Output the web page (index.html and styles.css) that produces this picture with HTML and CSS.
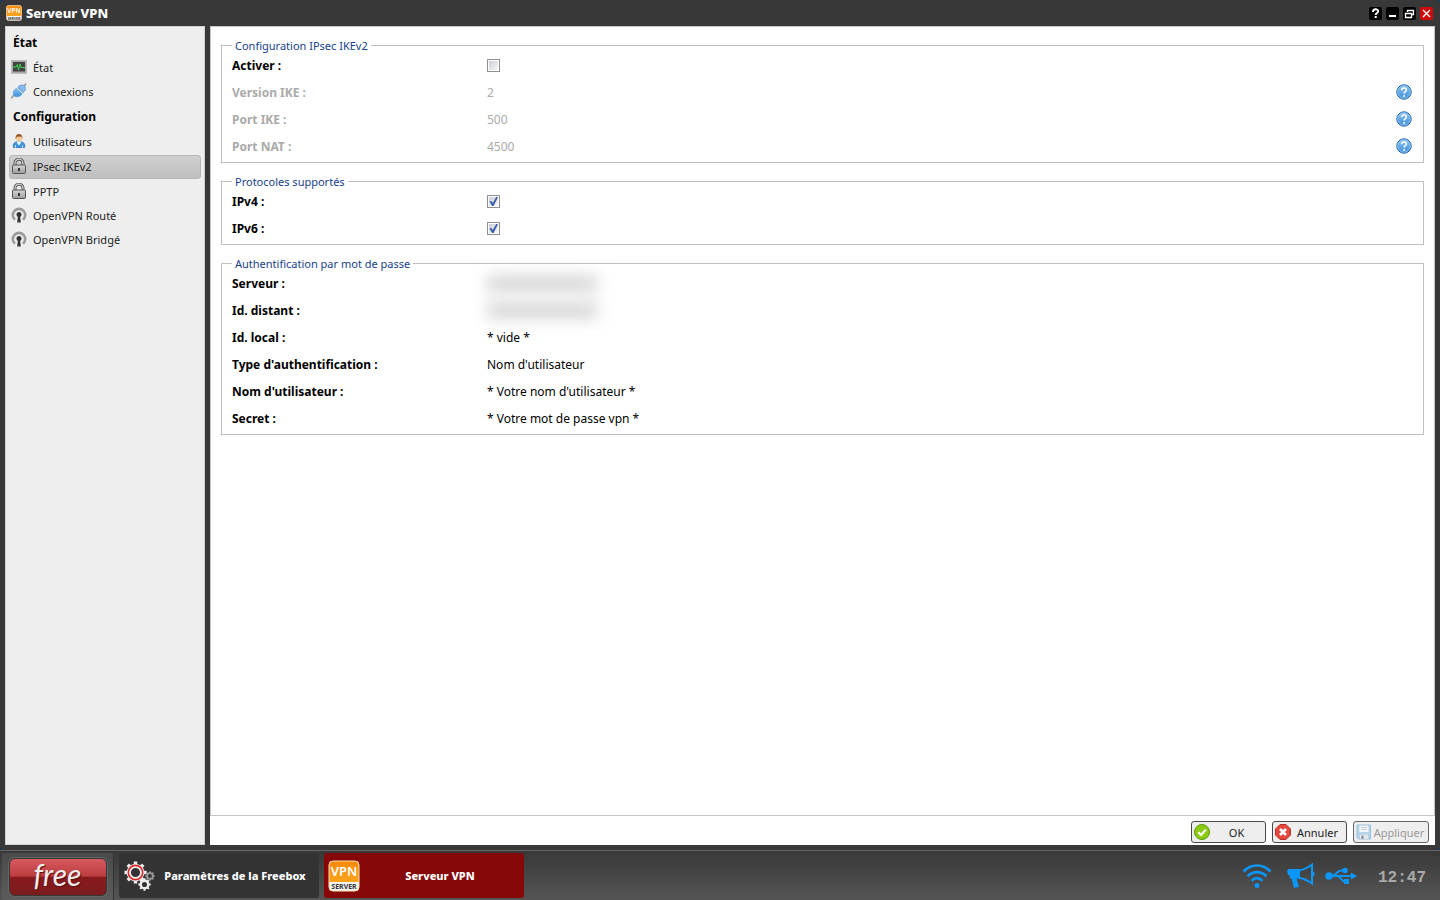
FILE: index.html
```html
<!DOCTYPE html>
<html lang="fr">
<head>
<meta charset="utf-8">
<title>Serveur VPN</title>
<link rel="stylesheet" href="styles.css">
</head>
<body>
<svg class="defs" aria-hidden="true">
  <defs>
    <linearGradient id="orange" x1="0" y1="0" x2="0" y2="1"><stop offset="0" stop-color="#f58a0a"/><stop offset="1" stop-color="#fda31a"/></linearGradient>
    <linearGradient id="steel" x1="0" y1="0" x2="0" y2="1"><stop offset="0" stop-color="#d8d8d8"/><stop offset="1" stop-color="#9a9a9a"/></linearGradient>
    <linearGradient id="sky" x1="0" y1="0" x2="0" y2="1"><stop offset="0" stop-color="#8ec2ee"/><stop offset="1" stop-color="#3c8fdc"/></linearGradient>
    <linearGradient id="silver" x1="0" y1="0" x2="0" y2="1"><stop offset="0" stop-color="#ffffff"/><stop offset="1" stop-color="#b8b8b8"/></linearGradient>
    <symbol id="vpn" viewBox="0 0 32 32">
      <rect x="1" y="1" width="30" height="30" rx="4" fill="#f3f3f3"/>
      <path d="M1 22V5a4 4 0 0 1 4-4h22a4 4 0 0 1 4 4v17z" fill="url(#orange)"/>
      <rect x="1" y="1" width="30" height="30" rx="4" fill="none" stroke="#fde3b4" stroke-width="1"/>
      <text x="16" y="16" text-anchor="middle" class="vpn-top">VPN</text>
      <text x="16" y="29" text-anchor="middle" class="vpn-bottom">SERVER</text>
    </symbol>
    <symbol id="lock" viewBox="0 0 16 16">
      <path d="M4 8V5.200a4 4 0 0 1 8 0V8" fill="none" stroke="#555" stroke-width="3"/>
      <path d="M4 8V5.200a4 4 0 0 1 8 0V8" fill="none" stroke="#d5d5d5" stroke-width="1.200"/>
      <rect x="1.500" y="7" width="13" height="8.500" rx="1" fill="url(#steel)" stroke="#555"/>
      <path d="M7 10h2v3H7z" fill="#333"/>
    </symbol>
    <symbol id="openvpn" viewBox="0 0 16 16">
      <path d="M4 12.800A6.200 6.200 0 1 1 12 12.800" fill="none" stroke="#9c9c9c" stroke-width="2.600"/>
      <circle cx="8" cy="7.500" r="2.500" fill="#333"/>
      <path d="M7 8h2l.8 7.500H6.200z" fill="#333"/>
    </symbol>
    <symbol id="help" viewBox="0 0 16 16">
      <circle cx="8" cy="8" r="7.200" fill="url(#sky)" stroke="#1c62b0"/>
      <circle cx="8" cy="8" r="6.200" fill="none" stroke="#a5cff4" stroke-width=".7"/>
      <path d="M5.600 6.200c0-3 4.800-3 4.800-.2 0 1.600-2.300 1.700-2.300 3.600" fill="none" stroke="#fff" stroke-width="1.500"/>
      <circle cx="8.100" cy="12" r="1" fill="#fff"/>
    </symbol>
    <symbol id="gear" viewBox="0 0 24 24">
      <circle cx="12" cy="12" r="7" fill="none" stroke="currentColor" stroke-width="4.500"/>
      <path d="M12 .5v5M12 18.500v5M.5 12h5M18.500 12h5M3.900 3.900l3.500 3.500M16.600 16.600l3.500 3.500M3.900 20.100l3.500-3.500M16.600 7.400l3.500-3.500" stroke="currentColor" stroke-width="3.600"/>
    </symbol>
  </defs>
</svg>
<div class="desktop">
  <section class="window">
    <header class="titlebar">
      <svg class="icon16"><use href="#vpn"/></svg>
      <h1>Serveur VPN</h1>
      <div class="tools">
        <button class="tool" aria-label="Aide"><svg viewBox="0 0 13 13"><path d="M4 5c0-3.600 5.200-3.400 5.200-.7C9.200 6 6.700 6 6.700 8" fill="none" stroke="#fff" stroke-width="1.900"/><path d="M5.700 9h2v2h-2z" fill="#fff"/></svg></button>
        <button class="tool" aria-label="Réduire"><svg viewBox="0 0 13 13"><path d="M3 8h7v2H3z" fill="#fff"/></svg></button>
        <button class="tool" aria-label="Restaurer"><svg viewBox="0 0 13 13"><path d="M4.500 5V3.500h6v4H9M2.500 6.500h6v4h-6z" fill="none" stroke="#fff" stroke-width="1.300"/></svg></button>
        <button class="tool close" aria-label="Fermer"><svg viewBox="0 0 13 13"><path d="M3 3l7 7M10 3l-7 7" stroke="#fff" stroke-width="1.400"/></svg></button>
      </div>
    </header>
    <div class="body">
      <nav class="sidebar">
        <h2>État</h2>
        <a href="#etat"><svg class="icon16" viewBox="0 0 16 16"><path d="M.5 1.500h15v13H.5z" fill="#aaa" stroke="#bbb"/><path d="M2 3h12v9.500H2z" fill="#444"/><path d="M2 8h3l1.200-2.500L7.500 11 9 5l1 3.500h4" fill="none" stroke="#3ad650"/></svg>État</a>
        <a href="#connexions"><svg class="icon16" viewBox="0 0 16 16"><path d="M0 15.500L4 11M11.500 5L15 .5" stroke="#999" stroke-width="1.600"/><path d="M3 13C1 9 3.500 5.500 7 5l4.500 5c-1 3-5 5-8.500 3z" fill="url(#sky)" stroke="#5a9cd8" stroke-width=".7"/><path d="M7 4C9 1.500 12 1.500 13.500 3S15 7.500 12 9.500z" fill="#86baf0" stroke="#4b8fd0" stroke-width=".7"/><path d="M6 5l5.500 5.500" stroke="#dcebfa"/></svg>Connexions</a>
        <h2>Configuration</h2>
        <a href="#utilisateurs"><svg class="icon16" viewBox="0 0 16 16"><path d="M2.500 14.500c-1-4 1.500-6 5.500-6s6.500 2 5.500 6z" fill="#3d97e5" stroke="#2068b4" stroke-width=".7"/><path d="M5.500 8.500h5L8.500 12h-1z" fill="#fff"/><path d="M4 12.500h1v2H4zM11 12.500h1v2h-1z" fill="#fff"/><circle cx="8" cy="5" r="3.200" fill="#f6c99b"/><path d="M4.600 6C3.800-.6 12.200-.6 11.400 6l-1-2.500-4.600.3z" fill="#93501f"/></svg>Utilisateurs</a>
        <a href="#ipsec" class="active" aria-current="page"><svg class="icon16"><use href="#lock"/></svg>IPsec IKEv2</a>
        <a href="#pptp"><svg class="icon16"><use href="#lock"/></svg>PPTP</a>
        <a href="#route"><svg class="icon16"><use href="#openvpn"/></svg>OpenVPN Routé</a>
        <a href="#bridge"><svg class="icon16"><use href="#openvpn"/></svg>OpenVPN Bridgé</a>
      </nav>
      <form class="main">
        <div class="panel">
          <fieldset>
            <legend>Configuration IPsec IKEv2</legend>
            <div class="row"><label for="on">Activer :</label><input type="checkbox" id="on"></div>
            <div class="row off"><span class="name">Version IKE :</span><span class="value">2</span><svg class="icon16"><use href="#help"/></svg></div>
            <div class="row off"><span class="name">Port IKE :</span><span class="value">500</span><svg class="icon16"><use href="#help"/></svg></div>
            <div class="row off"><span class="name">Port NAT :</span><span class="value">4500</span><svg class="icon16"><use href="#help"/></svg></div>
          </fieldset>
          <fieldset>
            <legend>Protocoles supportés</legend>
            <div class="row"><label for="v4">IPv4 :</label><input type="checkbox" id="v4" checked></div>
            <div class="row"><label for="v6">IPv6 :</label><input type="checkbox" id="v6" checked></div>
          </fieldset>
          <fieldset>
            <legend>Authentification par mot de passe</legend>
            <div class="row"><span class="name">Serveur :</span><span class="masked"></span></div>
            <div class="row"><span class="name">Id. distant :</span><span class="masked"></span></div>
            <div class="row"><span class="name">Id. local :</span><span class="value">* vide *</span></div>
            <div class="row"><span class="name">Type d'authentification :</span><span class="value">Nom d'utilisateur</span></div>
            <div class="row"><span class="name">Nom d'utilisateur :</span><span class="value">* Votre nom d'utilisateur *</span></div>
            <div class="row"><span class="name">Secret :</span><span class="value">* Votre mot de passe vpn *</span></div>
          </fieldset>
        </div>
        <footer class="actions">
          <button type="button"><svg class="icon16" viewBox="0 0 16 16"><circle cx="8" cy="8" r="7.500" fill="#8ccb14" stroke="#5e9c08"/><path d="M4.300 8.300l2.700 2.700 4.800-5.200" fill="none" stroke="#fff" stroke-width="2.200"/></svg><span>OK</span></button>
          <button type="button"><svg class="icon16" viewBox="0 0 16 16"><path d="M5 .5h6L15.500 5v6L11 15.500H5L.5 11V5z" fill="#e4483c" stroke="#b8342b"/><path d="M5 5l6 6M11 5l-6 6" stroke="#fff" stroke-width="2.600"/></svg><span>Annuler</span></button>
          <button type="button" disabled><svg class="icon16" viewBox="0 0 16 16"><path d="M1 1h13.500v14H2.500L1 13.500z" fill="#b5d4ea" stroke="#9cc0da"/><path d="M3.500 1.500h9V8h-9z" fill="#f3f6f8"/><path d="M5 3.500h6M5 5.500h6" stroke="#ccc"/><path d="M4 10.500h8V15H4z" fill="#e3e6e8"/><path d="M5.500 11.500h2V15h-2z" fill="#7d8d99"/></svg><span>Appliquer</span></button>
        </footer>
      </form>
    </div>
  </section>
  <footer class="taskbar">
    <div class="start"><button class="brand"><span>free</span></button></div>
    <button class="task"><span class="gears"><svg class="g1" viewBox="0 0 24 24"><use href="#gear"/><circle cx="12" cy="12" r="7.500" fill="none" stroke="#dc2a2a" stroke-width="1.700"/></svg><svg class="g2"><use href="#gear"/></svg><svg class="g3"><use href="#gear"/></svg></span><span>Paramètres de la Freebox</span></button>
    <button class="task current"><svg class="icon32"><use href="#vpn"/></svg><span>Serveur VPN</span></button>
    <div class="tray">
      <svg width="30" height="26" viewBox="0 0 30 26"><g fill="none" stroke="#0c96f8" stroke-width="2.700"><path d="M1.500 8.500c7.500-8 19.500-8 27 0"/><path d="M5.500 13.200c5.500-5.500 13.500-5.500 19 0"/><path d="M9.500 17.700c3.500-3.300 7.500-3.300 11 0"/></g><circle cx="15" cy="22.500" r="2.500" fill="#0c96f8"/></svg>
      <svg width="28" height="26" viewBox="0 0 28 26"><path d="M0 7.500L1.500 6H13v9.500H9.500L12 24l-5 1L4.500 15.500H3L2.500 12H1z" fill="#0c96f8"/><path d="M12 7.500c5-.5 9-3 13-6v19c-4-3-8-5-13-5.500" fill="none" stroke="#0c96f8" stroke-width="2"/><path d="M25 8c3.500 0 3.500 6 0 6" fill="#0c96f8"/></svg>
      <svg class="usb" width="32" height="18" viewBox="0 0 32 18"><g fill="none" stroke="#0c96f8" stroke-width="2"><path d="M3 9h25M7 9c4 0 5-5.500 9-5.500h3M12 9c4 0 4 5.500 8 5.500h2"/></g><circle cx="4" cy="9" r="3.800" fill="#0c96f8"/><circle cx="20" cy="3.500" r="2.800" fill="#0c96f8"/><path d="M19 12h5v5h-5zM26 5.500L32 9l-6 3.500z" fill="#0c96f8"/></svg>
      <time>12:47</time>
    </div>
  </footer>
</div>
</body>
</html>
```
FILE: styles.css
```css
* { box-sizing: border-box; }
body { margin: 0; background: #1d3a5c; color: #000; font: 11px/16px "Noto Sans", sans-serif; }
button { font: inherit; padding: 0; margin: 0; border: 0; color: inherit; }
.defs { position: absolute; width: 0; height: 0; }
.desktop { display: flex; flex-direction: column; min-height: 100vh; }
.window { flex: 1; display: flex; flex-direction: column; padding: 0 5px 5px; background: #383838; border-radius: 5px; }
.titlebar { display: flex; align-items: center; gap: 4px; height: 26px; padding: 0 2px 0 1px; color: #fff; }
.titlebar h1 { flex: 1; margin: 0; font-size: 13px; font-weight: 800; }
.icon16 { width: 16px; height: 16px; flex: none; }
.icon32 { width: 32px; height: 34px; flex: none; }
.vpn-top { font: 600 13px "Noto Sans", sans-serif; fill: #fff; }
.vpn-bottom { font: 700 7px "Noto Sans", sans-serif; fill: #333; }
.tools { display: flex; gap: 4px; }
.tool { width: 13px; height: 13px; background: #000; border-radius: 2px; }
.tool svg { display: block; width: 13px; height: 13px; }
.tool.close { background: #d00808; }
.body { flex: 1; display: flex; gap: 5px; }
.sidebar { width: 200px; padding: 4px 3px; background: #eee; border: 1px solid #cfcfcf; }
.sidebar h2 { margin: 0; padding: 0 4px; height: 25px; font-size: 12px; line-height: 24px; }
.sidebar h2 ~ h2 { height: 26px; line-height: 26px; }
.sidebar a { display: flex; align-items: center; gap: 6px; height: 24px; padding: 0 2px; border-radius: 3px; color: #222; text-decoration: none; }
.sidebar a .icon16 { margin-bottom: 2px; }
.sidebar a.active { margin: 1px 0; padding: 0 1px; background: linear-gradient(#cfcfcf, #bfbfbf); border: 1px solid #b8b8b8; }
.main { flex: 1; display: flex; flex-direction: column; background: #fff; }
.panel { flex: 1; padding: 12px 10px; border: 1px solid #c5c5c5; }
fieldset { margin: 0 0 12px; padding: 0 10px 2px; border: 1px solid #c0c0c0; min-width: 0; }
legend { height: 13px; padding: 0 3px; color: #15428b; line-height: 14px; }
.row { display: flex; align-items: center; height: 27px; font-size: 12px; }
.row label, .row .name { width: 255px; font-weight: 700; }
.row .value { flex: 1; }
.row.off { color: #aaa; }
.row .icon16 { margin: 0 1px 1px 0; }
.row input { appearance: none; display: grid; place-items: center; width: 13px; height: 13px; margin: 0; padding: 1px; border: 1px solid #8e8f8f; background: linear-gradient(135deg, #cbcfd5, #f6f6f6) content-box #f4f4f4; }
.row input:checked::after { content: ""; width: 9px; height: 9px; background: #3a5fa8; clip-path: polygon(5% 50%, 27% 45%, 42% 66%, 80% 0, 100% 4%, 50% 100%, 35% 100%); }
.masked { width: 110px; height: 15px; background: #d2d2d2; filter: blur(8px); }
.actions { display: flex; justify-content: flex-end; align-items: center; gap: 6px; height: 29px; padding: 3px 6px 0 0; }
.actions button { display: flex; align-items: center; width: 75px; height: 22px; padding: 0 2px; border: 1px solid #4a4a4a; border-radius: 3px; background: #eee; color: #222; }
.actions button span { flex: 1; padding-top: 2px; text-align: center; }
.actions button:last-child { width: 76px; }
.actions button:disabled { color: #999; border-color: #666; }
.taskbar { display: flex; height: 50px; padding-left: 2px; background: linear-gradient(#383838, #555); border-top: 1px solid #666; }
.start { display: flex; align-items: center; justify-content: center; width: 112px; margin-top: 2px; background: linear-gradient(#4a4a4a, #5c5c5c); border-right: 1px solid #333; }
.brand { width: 98px; height: 38px; padding-bottom: 6px; border: 1px solid #363636; border-radius: 6px; background: linear-gradient(#d65a5e 0, #bd3c40 48%, #871a1c 50%, #7c1b1c 100%); box-shadow: 0 0 0 1px #666; color: #eee; font: italic 400 30px/30px Lato, sans-serif; text-shadow: 1px 1px 1px #5a1010; }
.task { display: flex; align-items: center; width: 200px; height: 45px; margin: 2px 0 0 5px; padding: 0 4px; border-radius: 3px; background: #333; color: #fff; font-weight: 800; }
.task > span:last-child { flex: 1; text-align: center; }
.task.current { background: #870808; }
.gears { position: relative; width: 32px; height: 32px; flex: none; color: #eee; }
.gears svg { position: absolute; }
.g1 { left: 1px; top: 1px; width: 23px; height: 23px; }
.g2 { left: 15px; top: 18px; width: 13px; height: 13px; }
.g3 { left: 22px; top: 11px; width: 10px; height: 10px; color: #999; }
.tray { flex: 1; display: flex; justify-content: flex-end; align-items: center; gap: 15px; padding-right: 14px; }
.tray .usb { margin-left: -5px; }
.tray time { margin-left: 6px; padding-top: 5px; color: #aaa; font: bold 16px "Liberation Mono", monospace; }
```
